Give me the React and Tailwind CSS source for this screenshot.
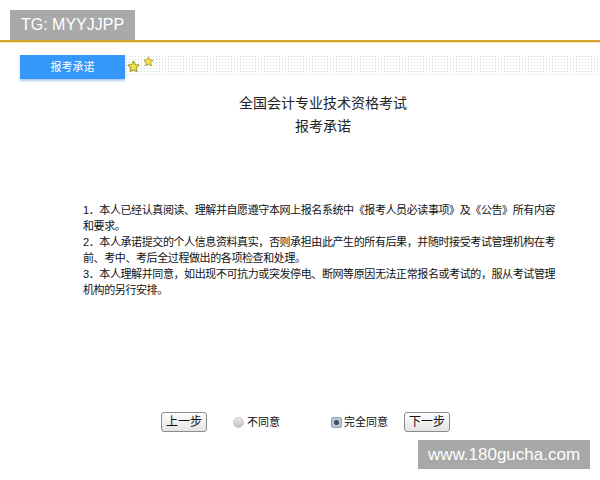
import React from 'react';

const cjk = "font-['Liberation_Sans','Noto_Sans_CJK_SC',sans-serif]";

function Star({ size = 10 }) {
    return (
        <svg width={size} height={size} viewBox="0 0 20 20">
            <path d="M10 1.5l2.6 5.4 5.9.8-4.3 4.1 1 5.9L10 14.9l-5.2 2.8 1-5.9L1.5 7.7l5.9-.8z" fill="#f3e34a" stroke="#a89a2a" strokeWidth="1.6" strokeLinejoin="round" />
        </svg>
    );
}

function Radio({ checked }) {
    if (checked) {
        return (
            <span className="w-[11px] h-[11px] rounded-[2px] bg-[#b9c7d9] border border-[#8fa3bd] flex items-center justify-center">
                <span className="w-[5px] h-[5px] rounded-full bg-[#3d4a5c]"></span>
            </span>
        );
    }
    return <span className="w-[11px] h-[11px] rounded-full bg-gradient-to-b from-[#e8e8e8] to-[#c4c4c4] border border-[#c8c8c8]"></span>;
}

function Btn({ children }) {
    return (
        <button className="w-[46px] h-[20px] rounded-[3px] border border-[#8c8c8c] bg-gradient-to-b from-[#fdfdfd] to-[#e4e4e4] text-[12px] leading-none text-[#111] flex items-center justify-center">
            {children}
        </button>
    );
}

const lines = [
    '1．本人已经认真阅读、理解并自愿遵守本网上报名系统中《报考人员必读事项》及《公告》所有内容',
    '和要求。',
    '2．本人承诺提交的个人信息资料真实，否则承担由此产生的所有后果，并随时接受考试管理机构在考',
    '前、考中、考后全过程做出的各项检查和处理。',
    '3．本人理解并同意，如出现不可抗力或突发停电、断网等原因无法正常报名或考试的，服从考试管理',
    '机构的另行安排。',
];

export default function App() {
    return (
        <div className={`w-[600px] h-[480px] bg-white relative overflow-hidden ${cjk}`}>
            <div className="pt-[10px] pl-[10px]">
                <div className="w-[125px] h-[30px] bg-[#a9a9a9] text-white text-[16px] flex items-center justify-center">
                    TG: MYYJJPP
                </div>
            </div>
            <div className="h-[2px] bg-[#d4a331]"></div>
            <div className="h-[1px] bg-[#f6e2ac]"></div>

            <div className="mt-[12px] flex items-start">
                <div className="ml-[20px] w-[105px] h-[24px] bg-[#3597f7] shadow-[0_2px_2px_rgba(80,140,220,0.45)] text-white text-[11px] flex items-center justify-center">
                    报考承诺
                </div>
                <div className="flex-1 h-[20px] bg-[radial-gradient(#d4d4d4_0.8px,transparent_0.9px)] bg-[length:3px_3px] flex items-start">
                    <span className="ml-[2px] mt-[5px]"><Star size={13} /></span>
                    <span className="ml-[3px] mt-[1px]"><Star size={11} /></span>
                </div>
            </div>

            <div className="mt-[13px] text-center text-[14px] leading-[23px] text-[#222]">
                <div className="pl-[46px]">全国会计专业技术资格考试</div>
                <div className="pl-[46px]">报考承诺</div>
            </div>

            <div className="mt-[64px] pl-[83px] text-[11px] leading-[16px] tracking-[-0.4px] text-[#111]">
                {lines.map((l, i) => (
                    <div key={i} className="whitespace-nowrap">{l}</div>
                ))}
            </div>

            <div className="mt-[114px] pl-[161px] flex items-center text-[11px] text-[#111]">
                <Btn>上一步</Btn>
                <div className="ml-[26px] flex items-center gap-[3px]">
                    <Radio />
                    <span>不同意</span>
                </div>
                <div className="ml-[51px] flex items-center gap-[2px]">
                    <Radio checked />
                    <span>完全同意</span>
                </div>
                <div className="ml-[16px]"><Btn>下一步</Btn></div>
            </div>

            <div className="absolute left-[418px] top-[440px] w-[172px] h-[29px] bg-[#a8a8a8] text-white text-[17px] flex items-center justify-center">
                www.180gucha.com
            </div>
        </div>
    );
}
